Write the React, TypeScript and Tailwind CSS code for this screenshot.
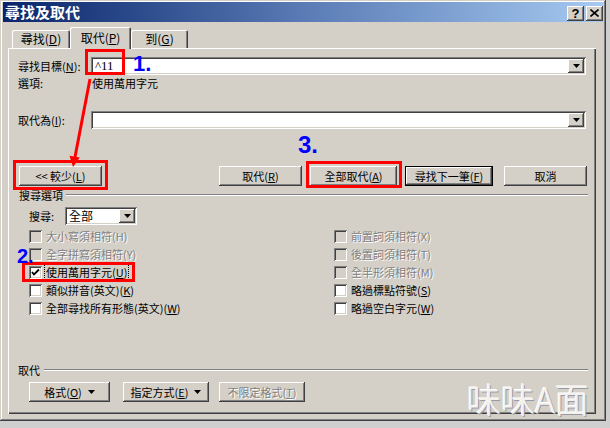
import React from "react";

const raised =
  "shadow-[inset_-1px_-1px_#404040,inset_1px_1px_#ffffff,inset_-2px_-2px_#808080,inset_2px_2px_#d4d0c8]";
const sunken =
  "shadow-[inset_1px_1px_#808080,inset_-1px_-1px_#ffffff,inset_2px_2px_#404040,inset_-2px_-2px_#d4d0c8]";

function U({ c }: { c: string }) {
  return <span className="underline underline-offset-[1px]">{c}</span>;
}

function Arrow() {
  return (
    <svg width="7" height="4" viewBox="0 0 7 4">
      <path d="M0 0H7L3.5 4Z" fill="#000" />
    </svg>
  );
}

function DropBtn() {
  return (
    <div className={`w-[16px] h-full bg-[#d4d0c8] flex items-center justify-center ${raised}`}>
      <Arrow />
    </div>
  );
}

function Btn({
  w,
  children,
  def,
  disabled,
}: {
  w: string;
  children: React.ReactNode;
  def?: boolean;
  disabled?: boolean;
}) {
  if (def) {
    return (
      <div className={`${w} h-[20px] border border-black shrink-0`}>
        <div className={`w-full h-full flex items-center justify-center bg-[#d4d0c8] ${raised}`}>{children}</div>
      </div>
    );
  }
  return (
    <div
      className={`${w} h-[20px] shrink-0 flex items-center justify-center bg-[#d4d0c8] ${raised} ${
        disabled ? "text-[#808080] [text-shadow:1px_1px_0_#ffffff]" : ""
      }`}
    >
      {children}
    </div>
  );
}

function Check({
  label,
  disabled,
  checked,
  focus,
}: {
  label: React.ReactNode;
  disabled?: boolean;
  checked?: boolean;
  focus?: boolean;
}) {
  return (
    <div className="h-[18px] flex items-center">
      <div
        className={`w-[13px] h-[13px] shrink-0 flex items-center justify-center ${sunken} ${
          disabled ? "bg-[#d4d0c8]" : "bg-white"
        }`}
      >
        {checked && (
          <svg width="13" height="13" viewBox="0 0 13 13">
            <path d="M3 6L5 8.5L10 3.5" stroke="#000" strokeWidth="1.8" fill="none" />
          </svg>
        )}
      </div>
      <div
        className={`ml-[2px] px-[1px] h-[16px] flex items-center ${
          focus ? "border border-dotted border-black" : "border border-transparent"
        } ${disabled ? "text-[#808080] [text-shadow:1px_1px_0_#ffffff]" : "text-black"}`}
      >
        {label}
      </div>
    </div>
  );
}

export default function App() {
  return (
    <div className="w-[610px] h-[428px] bg-[#cfcfcf] relative overflow-hidden font-['Noto_Sans_CJK_TC','Noto_Sans_CJK_SC',sans-serif] text-[11px] leading-[14px] text-black">
      {/* window */}
      <div
        className={`w-[606px] h-[421px] bg-[#d4d0c8] pt-[2px] px-[3px] flex flex-col shadow-[inset_-1px_-1px_#404040,inset_1px_1px_#d4d0c8,inset_-2px_-2px_#808080,inset_2px_2px_#ffffff]`}
      >
        {/* title bar */}
        <div className="h-[20px] shrink-0 bg-gradient-to-r from-[#0a246a] via-[#5a7bb5] to-[#a6caf0] flex items-center pl-[2px] pr-[0px]">
          <div className="text-white font-bold text-[15px] leading-[18px] tracking-[0px]">尋找及取代</div>
          <div className="ml-auto flex items-center gap-[2px] mt-[2px]">
            <div className={`w-[17px] h-[15px] bg-[#d4d0c8] flex items-center justify-center ${raised}`}>
              <span className="font-['Liberation_Sans'] font-bold text-[13px] leading-none">?</span>
            </div>
            <div className={`w-[17px] h-[15px] bg-[#d4d0c8] flex items-center justify-center ${raised}`}>
              <svg width="9" height="8" viewBox="0 0 9 8">
                <path d="M0.5 0.5L8.5 7.5M8.5 0.5L0.5 7.5" stroke="#000" strokeWidth="1.6" />
              </svg>
            </div>
          </div>
        </div>

        {/* tabs */}
        <div className="mt-[5px] ml-[7px] h-[21px] flex items-end shrink-0 text-[12px]">
          <div className="w-[58px] h-[18px] ml-[2px] flex items-center justify-center rounded-t-[2px] bg-[#d4d0c8] shadow-[inset_1px_1px_#ffffff,inset_-1px_0_#404040,inset_-2px_0_#808080]">
            尋找(<U c="D" />)
          </div>
          <div className="relative z-10 w-[61px] h-[22px] mb-[-1px] flex items-start pt-[4px] justify-center rounded-t-[2px] bg-[#d4d0c8] shadow-[inset_1px_1px_#ffffff,inset_-1px_0_#404040,inset_-2px_0_#808080]">
            取代(<U c="P" />)
          </div>
          <div className="w-[57px] h-[18px] flex items-center justify-center rounded-t-[2px] bg-[#d4d0c8] shadow-[inset_1px_1px_#ffffff,inset_-1px_0_#404040,inset_-2px_0_#808080]">
            到(<U c="G" />)
          </div>
        </div>

        {/* panel */}
        <div className="ml-[5px] w-[588px] h-[366px] shrink-0 bg-[#d4d0c8] pl-[10px] flex flex-col shadow-[inset_1px_1px_#ffffff,inset_-1px_-1px_#404040,inset_-2px_-2px_#808080]">
          {/* find */}
          <div className="mt-[9px] h-[18px] flex items-center">
            <div className="w-[73px] shrink-0">
              尋找目標(<U c="N" />):
            </div>
            <div className={`w-[495px] h-[18px] bg-white flex items-center p-[2px] ${sunken}`}>
              <span className="pl-[2px] flex-1 font-['Liberation_Serif'] text-[13px]">^11</span>
              <DropBtn />
            </div>
          </div>
          {/* options */}
          <div className="mt-[1px] h-[14px] flex items-center">
            <div className="w-[74px] shrink-0">選項:</div>
            <div>使用萬用字元</div>
          </div>
          {/* replace */}
          <div className="mt-[21px] h-[18px] flex items-center">
            <div className="w-[73px] shrink-0">
              取代為(<U c="I" />):
            </div>
            <div className={`w-[495px] h-[18px] bg-white flex items-center p-[2px] ${sunken}`}>
              <span className="flex-1" />
              <DropBtn />
            </div>
          </div>
          {/* buttons */}
          <div className="mt-[37px] h-[20px] flex items-center">
            <div className="ml-[1px]">
              <Btn w="w-[83px]">
                &lt;&lt; 較少(<U c="L" />)
              </Btn>
            </div>
            <div className="ml-[117px]">
              <Btn w="w-[83px]">
                取代(<U c="R" />)
              </Btn>
            </div>
            <div className="ml-[8px]">
              <Btn w="w-[87px]">
                全部取代(<U c="A" />)
              </Btn>
            </div>
            <div className="ml-[8px]">
              <Btn w="w-[88px]" def>
                尋找下一筆(<U c="F" />)
              </Btn>
            </div>
            <div className="ml-[11px]">
              <Btn w="w-[83px]">取消</Btn>
            </div>
          </div>
          {/* group label */}
          <div className="mt-[2px] h-[14px] flex items-center pr-[8px]">
            <div className="ml-[1px]">搜尋選項</div>
            <div className="ml-[3px] flex-1 h-[2px] border-t border-t-[#808080] border-b border-b-white" />
          </div>
          {/* search select */}
          <div className="mt-[5px] h-[18px] flex items-center pl-[11px]">
            <div className="w-[36px] shrink-0">搜尋:</div>
            <div className={`w-[72px] h-[18px] bg-white flex items-center p-[2px] ${sunken}`}>
              <span className="pl-[2px] flex-1 text-[12px]">全部</span>
              <DropBtn />
            </div>
          </div>
          {/* checkboxes */}
          <div className="mt-[2px] pl-[11px] grid grid-cols-[305px_1fr]">
            <Check disabled label={<>大小寫須相符(H)</>} />
            <Check disabled label={<>前置詞須相符(X)</>} />
            <Check disabled label={<>全字拼寫須相符(Y)</>} />
            <Check disabled label={<>後置詞須相符(T)</>} />
            <Check
              checked
              focus
              label={
                <>
                  使用萬用字元(<U c="U" />)
                </>
              }
            />
            <Check disabled label={<>全半形須相符(M)</>} />
            <Check
              label={
                <>
                  類似拼音(英文)(<U c="K" />)
                </>
              }
            />
            <Check
              label={
                <>
                  略過標點符號(<U c="S" />)
                </>
              }
            />
            <Check
              label={
                <>
                  全部尋找所有形態(英文)(<U c="W" />)
                </>
              }
            />
            <Check
              label={
                <>
                  略過空白字元(<U c="W" />)
                </>
              }
            />
          </div>
          {/* replace group */}
          <div className="mt-[46px] h-[14px] flex items-center pr-[8px]">
            <div>取代</div>
            <div className="ml-[4px] flex-1 h-[2px] border-t border-t-[#808080] border-b border-b-white" />
          </div>
          <div className="mt-[5px] h-[20px] flex items-center pl-[11px]">
            <Btn w="w-[81px]">
              <span>
                格式(<U c="O" />)
              </span>
              <span className="ml-[6px] flex">
                <Arrow />
              </span>
            </Btn>
            <div className="ml-[13px]">
              <Btn w="w-[86px]">
                <span>
                  指定方式(<U c="E" />)
                </span>
                <span className="ml-[6px] flex">
                  <Arrow />
                </span>
              </Btn>
            </div>
            <div className="ml-[10px]">
              <Btn w="w-[86px]" disabled>
                不限定格式(<U c="T" />)
              </Btn>
            </div>
          </div>
        </div>
      </div>

      {/* annotations */}
      <div className="absolute left-[85px] top-[49px] w-[40px] h-[26px] border-[3px] border-[#ff0000]" />
      <div className="absolute left-[13px] top-[160px] w-[95px] h-[30px] border-[3px] border-[#ff0000]" />
      <div className="absolute left-[306px] top-[161px] w-[96px] h-[27px] border-[3px] border-[#ff0000]" />
      <div className="absolute left-[22px] top-[262px] w-[113px] h-[20px] border-[3px] border-[#ff0000]" />

      <div className="absolute left-[133px] top-[53px] font-['Liberation_Sans'] font-bold text-[22px] leading-none text-[#0000ff]">
        1.
      </div>
      <div className="absolute left-[298px] top-[133px] font-['Liberation_Sans'] font-bold text-[24px] leading-none text-[#0000ff]">
        3.
      </div>
      <div className="absolute left-[17px] top-[246px] font-['Liberation_Sans'] font-bold text-[20px] leading-none text-[#0000ff]">
        2.
      </div>

      <svg className="absolute left-0 top-0 pointer-events-none" width="610" height="428">
        <line x1="90" y1="79" x2="75" y2="157" stroke="#ff0000" strokeWidth="3" />
        <polygon points="73,167 79.8,157.5 69.5,155.8" fill="#ff0000" />
      </svg>

      <div className="absolute left-[467px] top-[382px] text-[34px] leading-none font-light text-[#f3f1ec] [text-shadow:-1px_-1px_0_#ffffff,1px_1px_0_#9a9aa6] whitespace-nowrap">
        味味A面
      </div>
    </div>
  );
}
